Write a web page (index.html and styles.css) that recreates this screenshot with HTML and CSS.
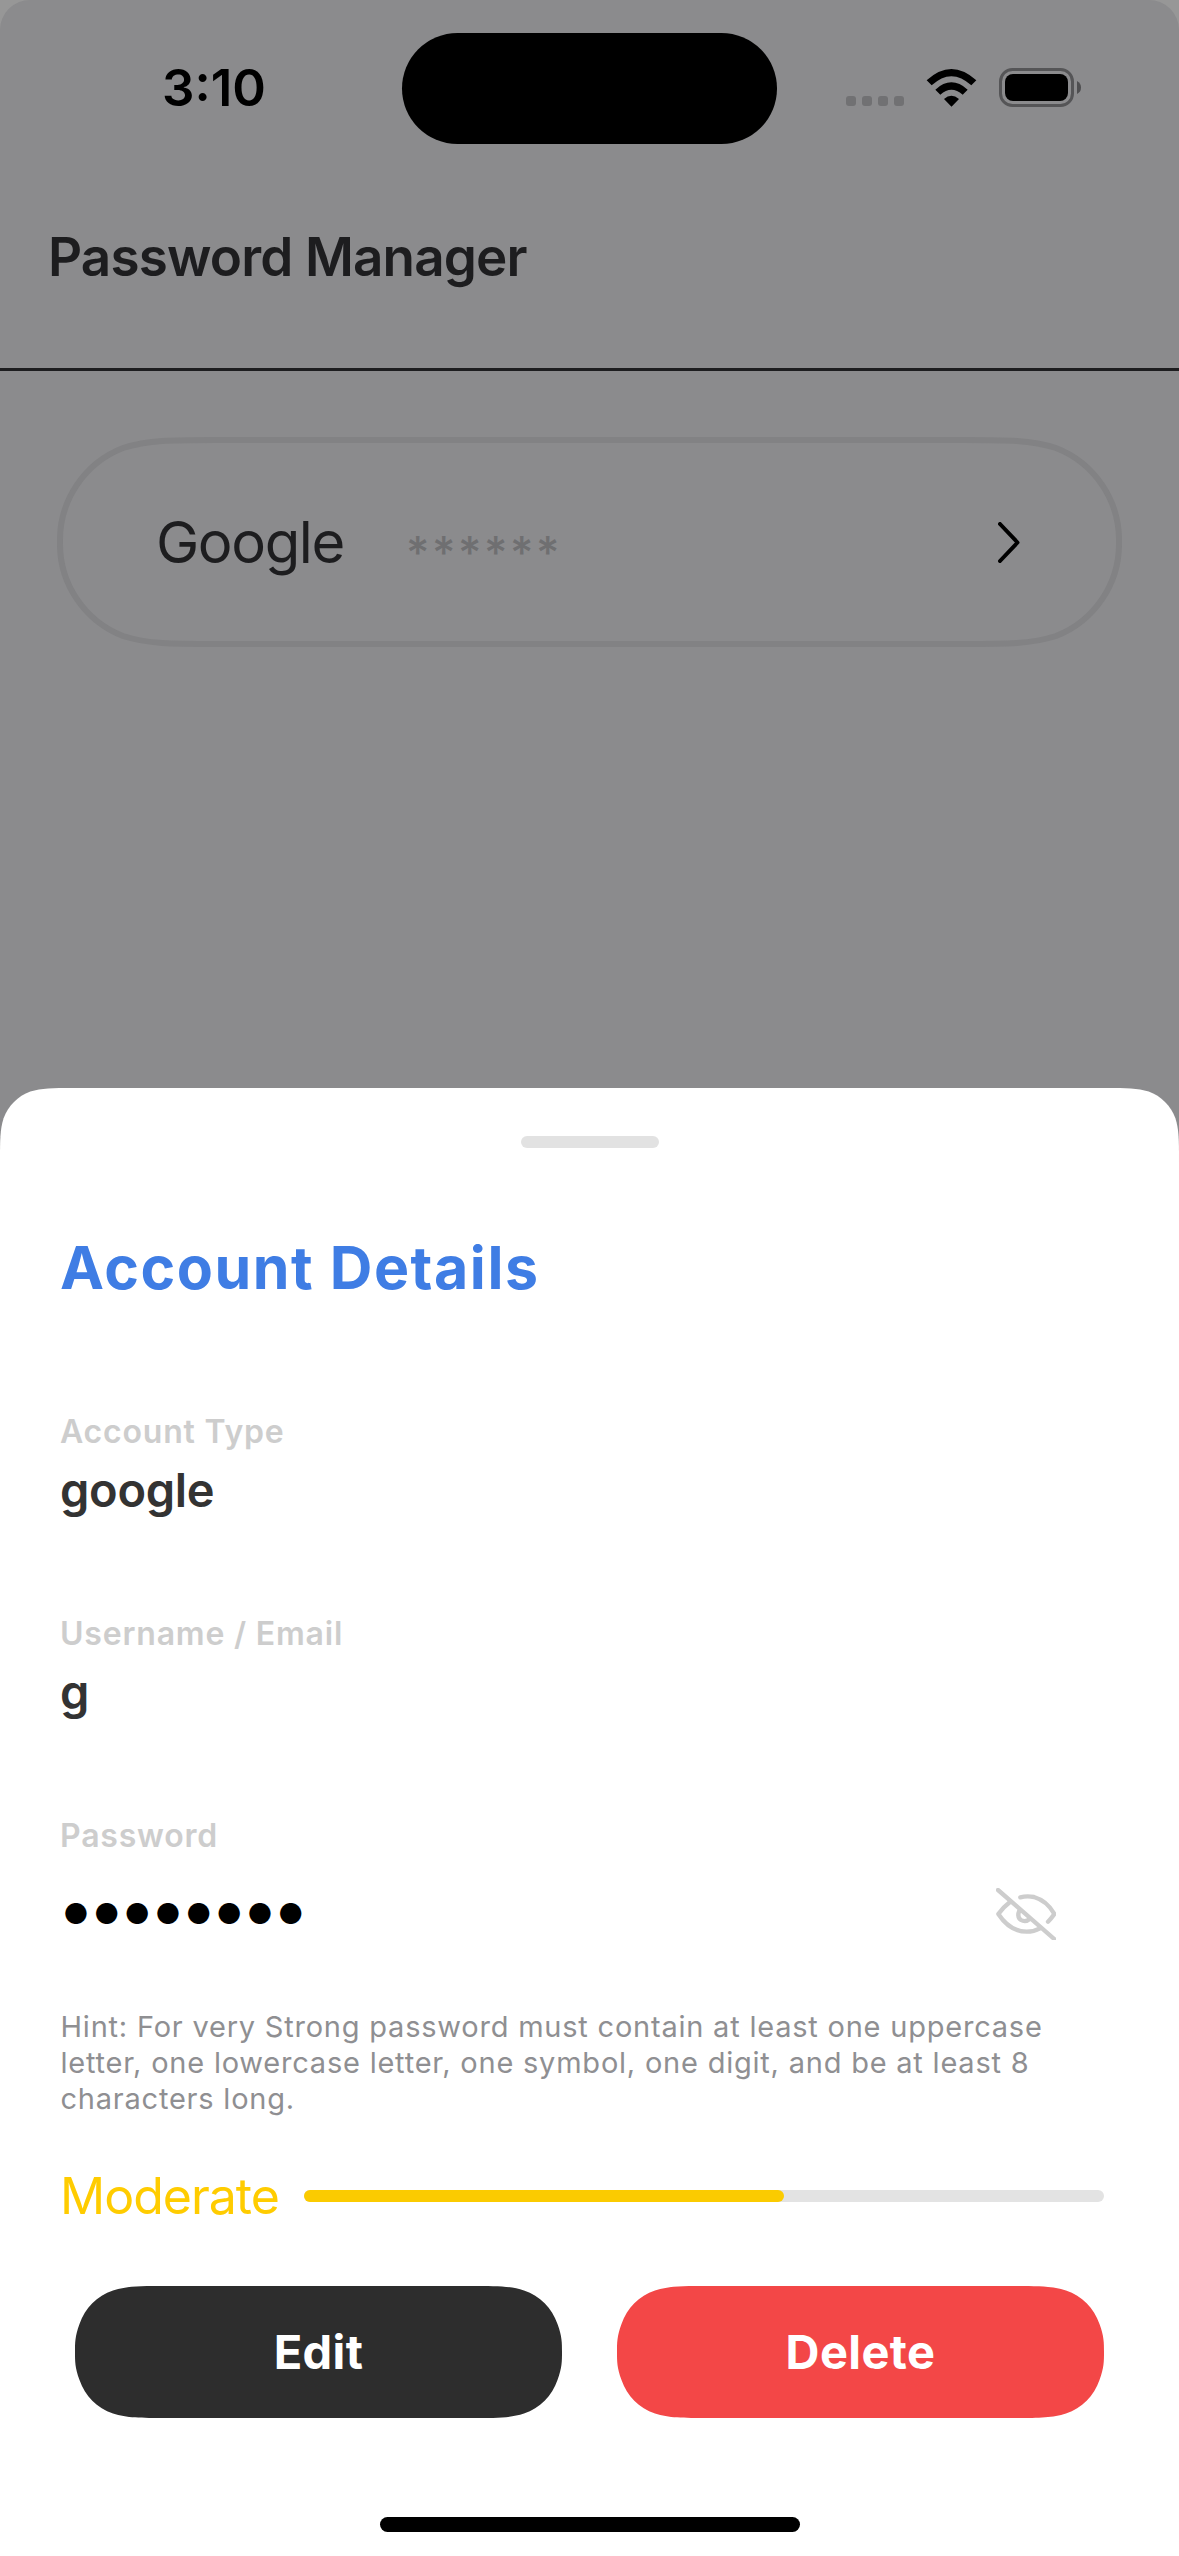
FILE: index.html
```html
<!DOCTYPE html>
<html lang="en">
<head>
<meta charset="utf-8">
<title>Password Manager</title>
<link rel="stylesheet" href="styles.css">
</head>
<body>
<main class="screen">
  <section class="home">
    <div class="status">
      <span class="time">3:10</span>
      <div class="island"></div>
      <div class="cell"><i></i><i></i><i></i><i></i></div>
      <svg class="wifi" viewBox="0 0 153 114"><path d="M2 34Q76-34 151 34L136 49Q76-6 17 49ZM28 62Q76 18 125 62L110 77Q76 48 43 77ZM54 90Q76 70 99 90L76.500 113Z"/></svg>
      <svg class="battery" viewBox="0 0 82 39"><rect x="1.500" y="1.500" width="72" height="36" rx="12" fill="none" stroke="#555557" stroke-width="3"/><rect x="6" y="6" width="63" height="27" rx="8"/><path d="M78 13Q82 15 82 19.500Q82 24 78 26Z" fill="#4e4e50"/></svg>
    </div>
    <header class="topbar"><h1 class="title">Password Manager</h1></header>
    <div class="card">
      <svg class="card-frame" viewBox="0 0 1065 210"><path d="M160 3H905C951 3 974 3 999 11A99 99 0 0 1 1062 105A99 99 0 0 1 999 199C974 207 951 207 905 207H160C114 207 91 207 66 199A99 99 0 0 1 3 105A99 99 0 0 1 66 11C91 3 114 3 160 3Z"/></svg>
      <span class="name">Google</span>
      <span class="mask">******</span>
      <svg class="chevron" viewBox="0 0 22 41"><path d="M2 2L19.500 20.500L2 39"/></svg>
    </div>
  </section>
  <section class="sheet">
    <div class="grabber"></div>
    <h2 class="heading">Account Details</h2>
    <div class="field"><span class="label">Account Type</span><span class="value">google</span></div>
    <div class="field"><span class="label">Username / Email</span><span class="value">g</span></div>
    <div class="field"><span class="label">Password</span>
      <div class="secret"><span class="dots">●●●●●●●●</span>
        <svg class="eye" viewBox="108 85 180 156"><path d="M114 91L285 240M150 127Q128 144 115 163Q150 216 200 216Q222 216 240 206M181 113Q200 108 222 112Q262 124 283 163Q274 176 264 186M178 153Q170 172 183 181Q196 189 209 178"/></svg>
      </div>
    </div>
    <p class="hint">Hint: For very Strong password must contain at least one uppercase<br>letter, one lowercase letter, one symbol, one digit, and be at least 8<br>characters long.</p>
    <div class="strength"><span class="level">Moderate</span><div class="meter"><div class="meter-fill" style="width:60%"></div></div></div>
    <div class="actions"><button class="btn edit">Edit</button><button class="btn delete">Delete</button></div>
    <div class="home-bar"></div>
  </section>
</main>
</body>
</html>
```
FILE: styles.css
```css
* { box-sizing: border-box; margin: 0; padding: 0; }
body { font-family: Inter, "Liberation Sans", sans-serif; background: #979797; }
.screen { position: relative; width: 1179px; height: 2556px; overflow: hidden; }
.home { height: 100%; background: #8b8b8d; border-radius: 30px 30px 0 0; }
.status { height: 170px; display: flex; align-items: flex-start; padding-left: 162px; }
.time { width: 240px; margin-top: 58px; font-size: 51px; line-height: 60px; font-weight: 600; }
.island { width: 375px; height: 111px; margin-top: 33px; border-radius: 56px; background: #000; }
.cell { display: flex; gap: 6px; margin: 96px 0 0 69px; }
.cell i { width: 10px; height: 10px; border-radius: 3px; background: #717173; }
.wifi { width: 51px; height: 38px; margin: 69px 0 0 22px; }
.battery { width: 82px; height: 39px; margin: 68px 0 0 22px; }
.topbar { height: 201px; padding: 55px 0 0 48px; border-bottom: 3px solid #1d1d1f; }
.title { font-size: 53px; line-height: 64px; font-weight: 600; letter-spacing: -0.85px; color: #1d1d1f; }
.card { position: relative; display: flex; align-items: center; height: 210px; margin: 66px 57px 0; padding: 0 102px 0 99px; }
.card-frame { position: absolute; inset: 0; width: 100%; height: 100%; fill: none; stroke: #828284; stroke-width: 6; }
.name { width: 250px; font-size: 58px; line-height: 60px; letter-spacing: -1.4px; color: #1d1d1f; }
.mask { padding-top: 22px; font-size: 45px; line-height: 60px; font-weight: 500; letter-spacing: 2.6px; color: #6f6f71; }
.chevron { width: 22px; height: 41px; margin-left: auto; fill: none; stroke: #000; stroke-width: 4; stroke-linecap: round; stroke-linejoin: round; }
.sheet { position: absolute; inset: 1088px 0 0; padding: 48px 75px 0 60px; background: #fff; clip-path: path("M0 1468V73.400C0 52.200 0 41.700 3.600 30.300C8.100 17.900 17.900 8.100 30.300 3.600C41.700 0 52.200 0 73.400 0H1105.600C1126.800 0 1137.300 0 1148.700 3.600C1161.100 8.100 1170.900 17.900 1175.400 30.300C1179 41.700 1179 52.200 1179 73.400V1468Z"); }
.grabber { width: 138px; height: 12px; margin-left: 461px; border-radius: 6px; background: #e2e2e2; }
.heading { margin-top: 85px; font-size: 59px; line-height: 70px; font-weight: 700; letter-spacing: 1.55px; color: #3f7de4; }
.field { display: flex; flex-direction: column; margin-top: 96px; }
.heading + .field { margin-top: 109px; }
.label { font-size: 32px; line-height: 40px; font-weight: 600; letter-spacing: 0.8px; color: #cdcdcd; }
.value { margin-top: 10px; font-size: 47px; line-height: 56px; font-weight: 600; letter-spacing: -0.3px; color: #333; }
.secret { display: flex; align-items: center; justify-content: space-between; height: 70px; margin-top: 23px; padding-right: 48px; }
.dots { padding-left: 3px; font-size: 28.300px; line-height: 70px; letter-spacing: 4.800px; color: #000; }
.eye { width: 60px; height: 52px; fill: none; stroke: #cdcdcd; stroke-width: 13; stroke-linecap: round; stroke-linejoin: round; }
.hint { margin-top: 60px; padding-left: 0.500px; font-size: 29px; line-height: 36px; letter-spacing: 0.78px; color: #8f8f92; white-space: nowrap; }
.strength { display: flex; align-items: center; height: 60px; margin-top: 49px; }
.level { width: 244px; font-size: 50px; line-height: 60px; letter-spacing: -1px; color: #fc0; }
.meter { width: 800px; height: 12px; border-radius: 6px; background: #e3e3e3; }
.meter-fill { height: 12px; border-radius: 6px; background: #fbcb00; }
.actions { display: flex; gap: 55px; margin: 60px 0 0 15px; }
.btn { width: 487px; height: 132px; border: 0; color: #fff; font: 700 47px/56px Inter, sans-serif; letter-spacing: 0.4px; clip-path: path("M92 0H395C422 0 435 0 449 4.500C465 10 477 22 482.500 38C487 50 487 57 487 66C487 75 487 82 482.500 94C477 110 465 122 449 127.500C435 132 422 132 395 132H92C65 132 52 132 38 127.500C22 122 10 110 4.500 94C0 82 0 75 0 66C0 57 0 50 4.500 38C10 22 22 10 38 4.500C52 0 65 0 92 0Z"); }
.edit { background: #2d2d2d; }
.delete { background: #f34747; }
.home-bar { width: 420px; height: 15px; margin: 99px 0 0 320px; border-radius: 8px; background: #000; }
```
